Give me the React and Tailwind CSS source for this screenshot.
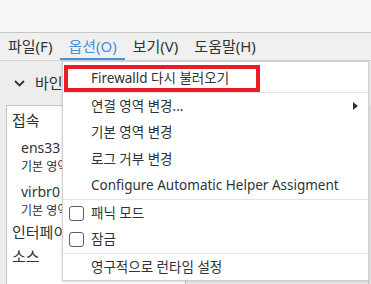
import React from "react";

const font = { fontFamily: '"Noto Sans", "Noto Sans CJK KR", sans-serif' };

const menubar = [
  { label: "파일(F)" },
  { label: "옵션(O)", active: true },
  { label: "보기(V)" },
  { label: "도움말(H)" },
];

const MenuItem = ({ children, check, arrow }) => (
  <div className="h-[26.5px] flex items-center relative pl-[28px] pr-3 text-[13.5px] text-[#2e3436]">
    {check && (
      <span className="absolute left-[6px] top-[6px] w-[15px] h-[15px] rounded-[3px] border border-[#5c6164] bg-white" />
    )}
    <span>{children}</span>
    {arrow && (
      <svg className="absolute right-[10px] top-[9px]" width="5" height="8" viewBox="0 0 5 8">
        <path d="M0 0 L5 4 L0 8 Z" fill="#2e3436" />
      </svg>
    )}
  </div>
);

const Sep = () => <div className="h-px bg-[#e2e2e2]" />;

export default function App() {
  return (
    <div className="w-[371px] h-[284px] overflow-hidden relative bg-[#ededed]" style={font}>
      {/* title strip */}
      <div className="h-[33px] bg-[#f6f6f6] border-b border-[#c4c4c4]" />

      {/* menu bar */}
      <div className="h-[28px] flex items-stretch bg-[#f0f0f0] border-b border-[#d2d2d2] text-[15px] text-[#2e3436]">
        {menubar.map((m) => (
          <div
            key={m.label}
            className={
              m.active
                ? "px-2 flex items-center border-b-2 border-[#4a90d9] text-[#4a90d9] pt-[2px]"
                : "px-2 flex items-center border-b-2 border-transparent pt-[2px]"
            }
          >
            {m.label}
          </div>
        ))}
      </div>

      {/* background content */}
      <div className="flex items-center h-[44px] pl-[14px] gap-[10px] text-[15px] text-[#2e3436]">
        <svg width="11" height="7" viewBox="0 0 11 7">
          <path d="M1 1 L5.5 5.5 L10 1" stroke="#2e3436" strokeWidth="1.8" fill="none" />
        </svg>
        <span>바인딩</span>
      </div>
      <div className="flex h-[200px]">
        <div className="ml-[6px] w-[180px] bg-white border border-[#c4c4c4] text-[#2e3436] pl-[5px] pt-[2px]">
          <div className="text-[15px] h-[24px] flex items-center">접속</div>
          <div className="pl-[9px] pt-[4px]">
            <div className="text-[14px] h-[22px] flex items-center">ens33</div>
            <div className="text-[12px] h-[18px] flex items-center">기본 영역</div>
            <div className="text-[14px] h-[26px] flex items-end">virbr0</div>
            <div className="text-[12px] h-[18px] flex items-center">기본 영역</div>
          </div>
          <div className="text-[15px] h-[24px] flex items-center">인터페이스</div>
          <div className="text-[15px] h-[24px] flex items-center">소스</div>
        </div>
        <div className="flex-1" />
        <div className="w-[3px] border-l border-[#c4c4c4] bg-[#e4e4e4]" />
      </div>

      {/* dropdown menu */}
      <div className="absolute left-[62px] top-[61px] w-[307px] bg-white border border-[#cfcfcf] shadow-[0_1px_3px_rgba(0,0,0,0.15)] pt-[3px]">
        <MenuItem>Firewalld 다시 불러오기</MenuItem>
        <Sep />
        <MenuItem arrow>연결 영역 변경...</MenuItem>
        <MenuItem>기본 영역 변경</MenuItem>
        <MenuItem>로그 거부 변경</MenuItem>
        <MenuItem>Configure Automatic Helper Assigment</MenuItem>
        <Sep />
        <MenuItem check>패닉 모드</MenuItem>
        <MenuItem check>잠금</MenuItem>
        <Sep />
        <MenuItem>영구적으로 런타임 설정</MenuItem>
        {/* red highlight box */}
        <div className="absolute left-[1px] top-[3px] w-[196px] h-[27px] border-4 border-[#ed1c24]" />
      </div>
    </div>
  );
}
